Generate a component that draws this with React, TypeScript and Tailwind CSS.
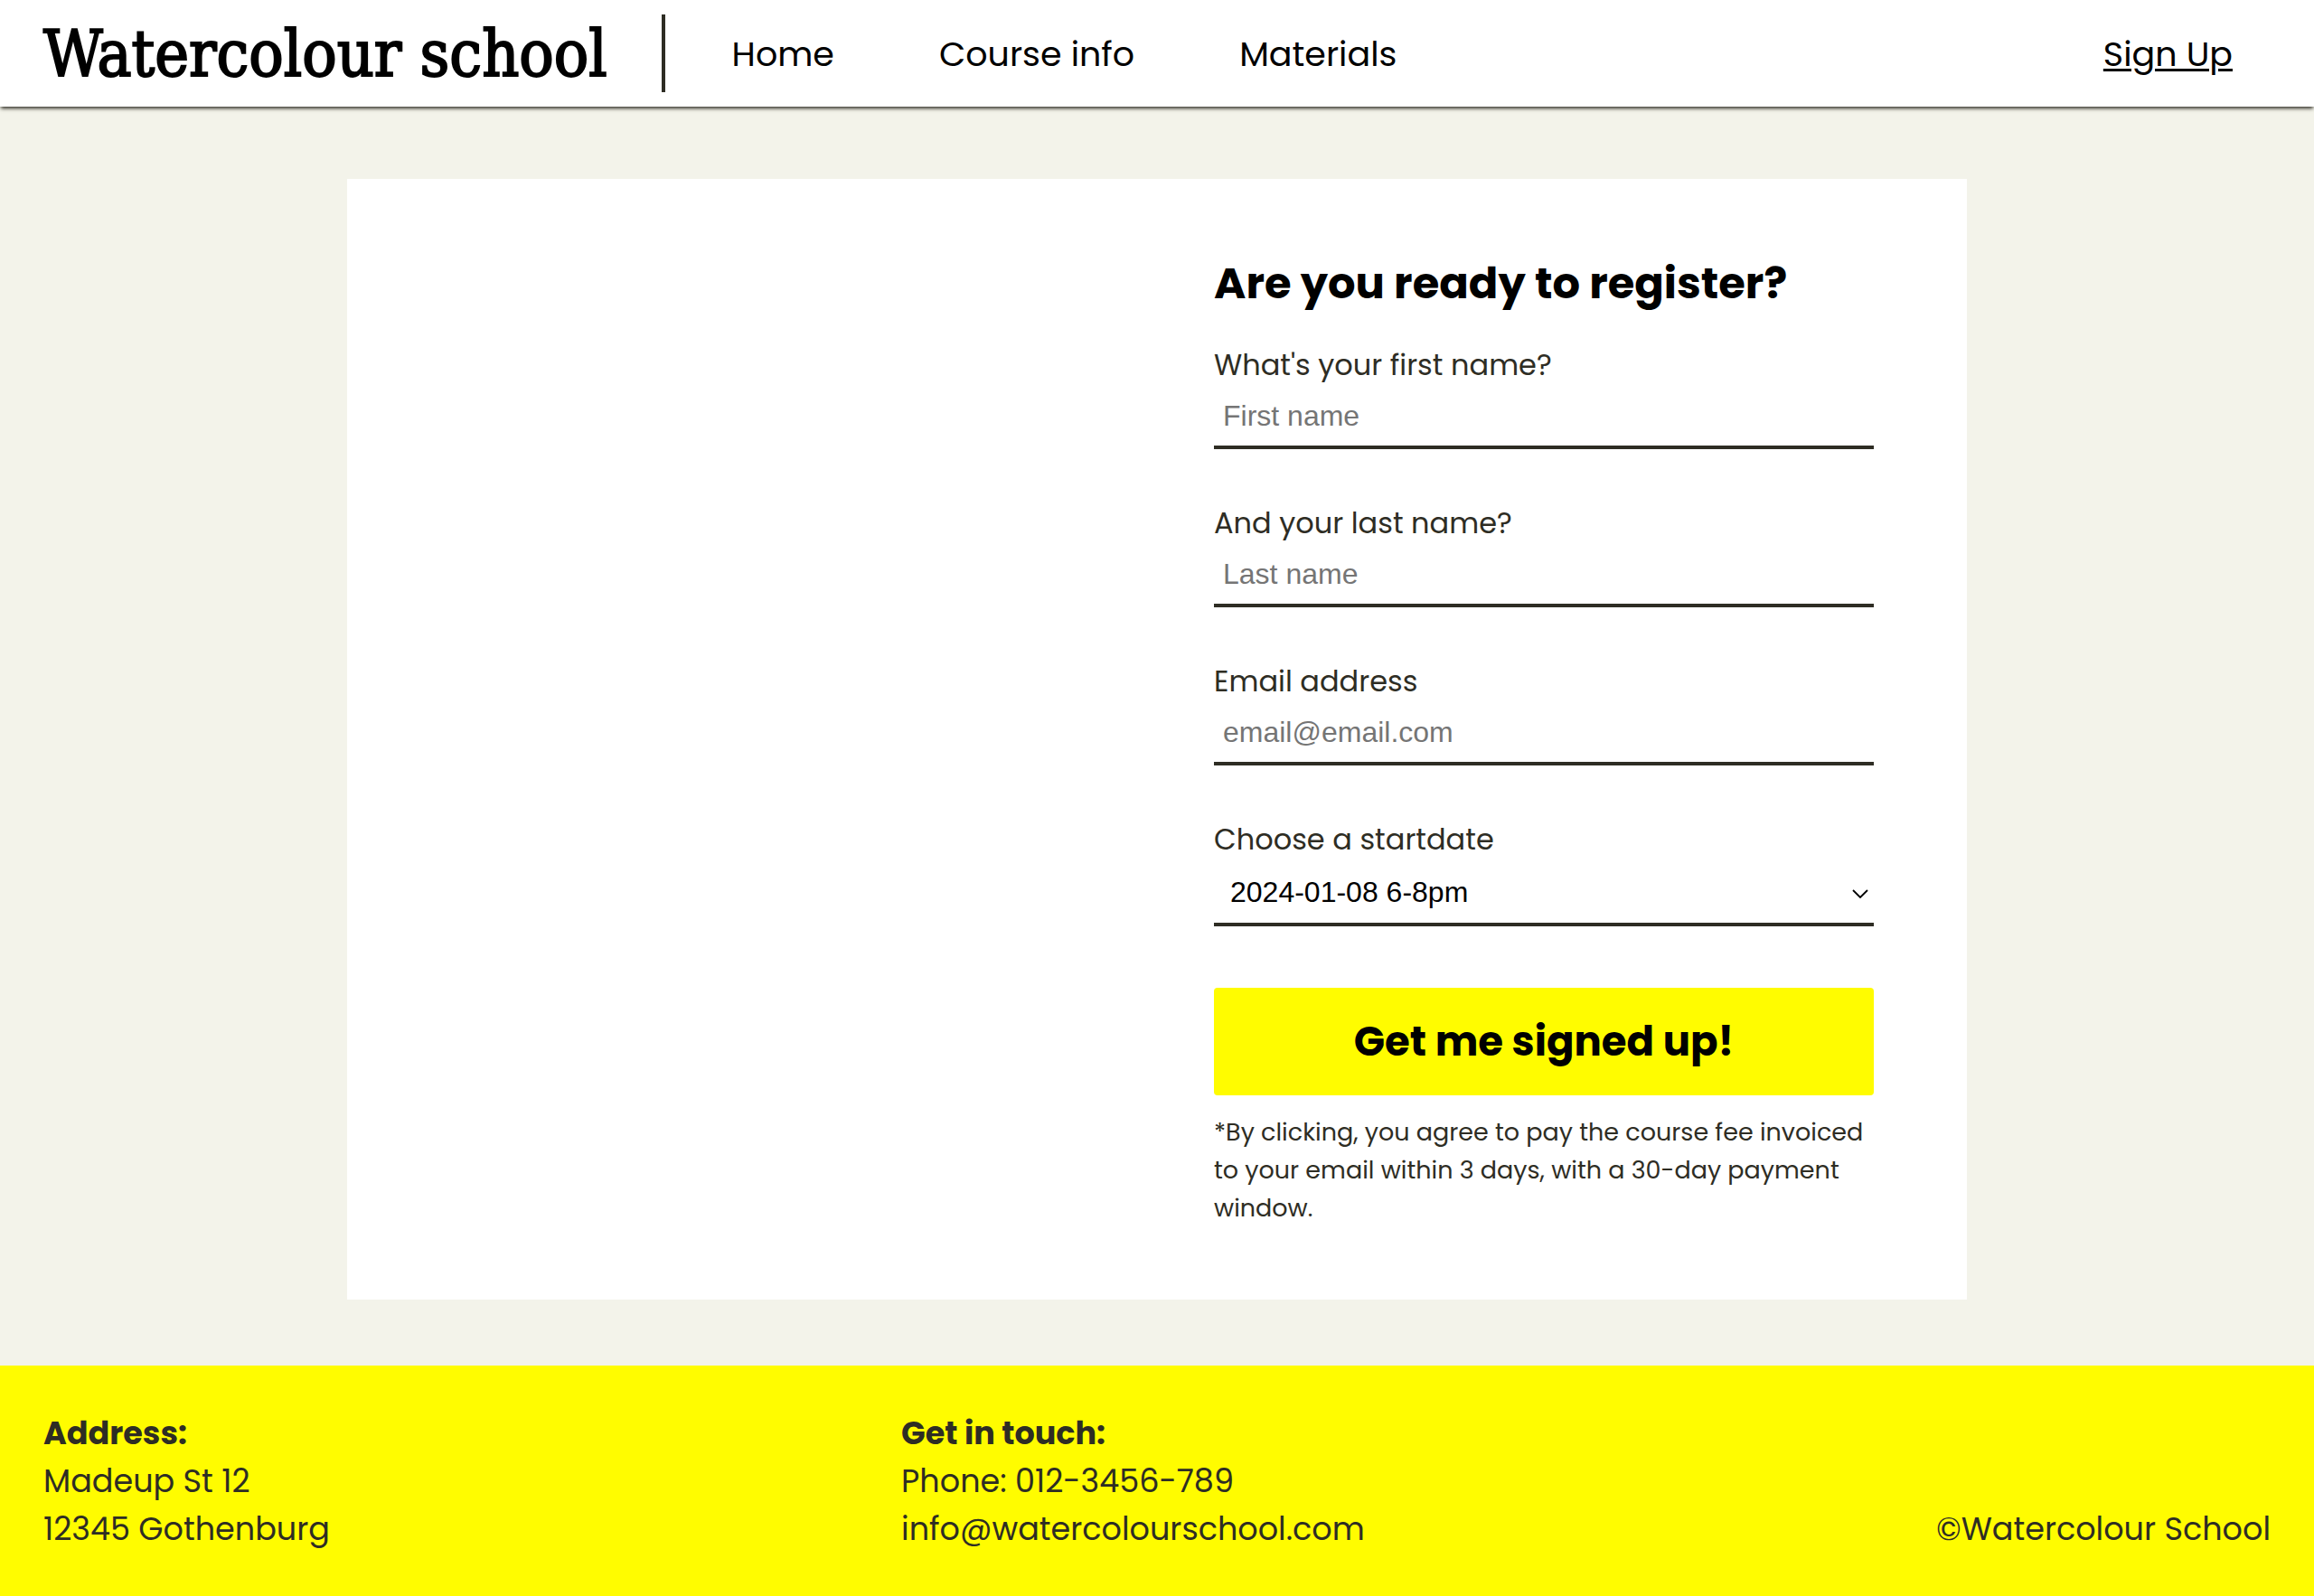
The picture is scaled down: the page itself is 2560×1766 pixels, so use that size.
import React from "react";

const navLinks = ["Home", "Course info", "Materials"];

const textFields = [
  { id: "first-name", label: "What's your first name?", placeholder: "First name", type: "text" },
  { id: "last-name", label: "And your last name?", placeholder: "Last name", type: "text" },
  { id: "email", label: "Email address", placeholder: "email@email.com", type: "email" },
];

const labelClass = "text-[32px] leading-[48px]";
const controlClass =
  "w-full rounded-none border-b-4 border-[#2e2d24] bg-transparent pb-px font-['Liberation_Sans',Arial,sans-serif] text-[32px] outline-none";

function Header() {
  return (
    <header className="relative flex h-[118px] items-center bg-white pr-[90px] pl-12 text-black shadow-[0_3px_4px_-1px_#2e2d24]">
      <a
        href="#home"
        className="pr-[60px] font-['DejaVu_Serif_Condensed','DejaVu_Serif',serif] text-[71px] leading-none whitespace-nowrap [-webkit-text-stroke:2px_black]"
      >
        Watercolour school
      </a>
      <nav className="flex h-[86px] grow items-center gap-[116px] border-l-4 border-[#2e2d24] pl-[74px] text-[38px] whitespace-nowrap">
        {navLinks.map((link) => (
          <a key={link} href="#nav">
            {link}
          </a>
        ))}
        <a href="#signup" className="ml-auto underline decoration-[3px] underline-offset-[3px]">
          Sign Up
        </a>
      </nav>
    </header>
  );
}

function SignupForm() {
  return (
    <form className="flex flex-col py-20 pr-[103px] pl-[63px]">
      <h1 className="mb-[30px] text-[48px] leading-[72px] font-bold whitespace-nowrap text-black">
        Are you ready to register?
      </h1>
      <div className="flex flex-col gap-[58px]">
        {textFields.map((field) => (
          <div key={field.id} className="flex flex-col">
            <label htmlFor={field.id} className={labelClass}>
              {field.label}
            </label>
            <input
              id={field.id}
              type={field.type}
              placeholder={field.placeholder}
              className={`${controlClass} h-[69px] px-2.5 placeholder:text-[#757575]`}
            />
          </div>
        ))}
        <div className="flex flex-col">
          <label htmlFor="startdate" className={labelClass}>
            Choose a startdate
          </label>
          <div className="relative">
            <select id="startdate" className={`${controlClass} block h-[72px] appearance-none px-[18px] text-black`}>
              <option>2024-01-08 6-8pm</option>
            </select>
            <svg
              viewBox="0 0 18 10"
              className="pointer-events-none absolute top-[31px] right-1.5 h-2.5 w-[18px]"
              fill="none"
              stroke="black"
              strokeWidth="1.8"
              aria-hidden="true"
            >
              <path d="M1 1l8 8L17 1" />
            </svg>
          </div>
        </div>
      </div>
      <button type="button" className="mt-[68px] h-[119px] rounded bg-[#fffc00] text-[45px] font-bold text-black">
        Get me signed up!
      </button>
      <p className="mt-5 text-[27px] leading-[42px]">
        *By clicking, you agree to pay the course fee invoiced to your email within 3 days, with a 30-day payment
        window.
      </p>
    </form>
  );
}

function Footer() {
  return (
    <footer className="flex items-end justify-between bg-[#fffc00] p-12 text-[35px] leading-[53px]">
      <address className="not-italic">
        <p className="font-bold">Address:</p>
        <p>Madeup St 12</p>
        <p>12345 Gothenburg</p>
      </address>
      <div>
        <p className="font-bold">Get in touch:</p>
        <p>Phone: 012-3456-789</p>
        <p>info@watercolourschool.com</p>
      </div>
      <p>©Watercolour School</p>
    </footer>
  );
}

export default function App() {
  return (
    <div className="flex min-h-screen flex-col bg-[#f3f3ea] font-[Poppins,Inter,sans-serif] text-[#2e2d24]">
      <Header />
      <main className="grow pt-20 pb-[73px]">
        <div className="mx-auto grid w-[70%] grid-cols-2 bg-white">
          <div />
          <SignupForm />
        </div>
      </main>
      <Footer />
    </div>
  );
}
